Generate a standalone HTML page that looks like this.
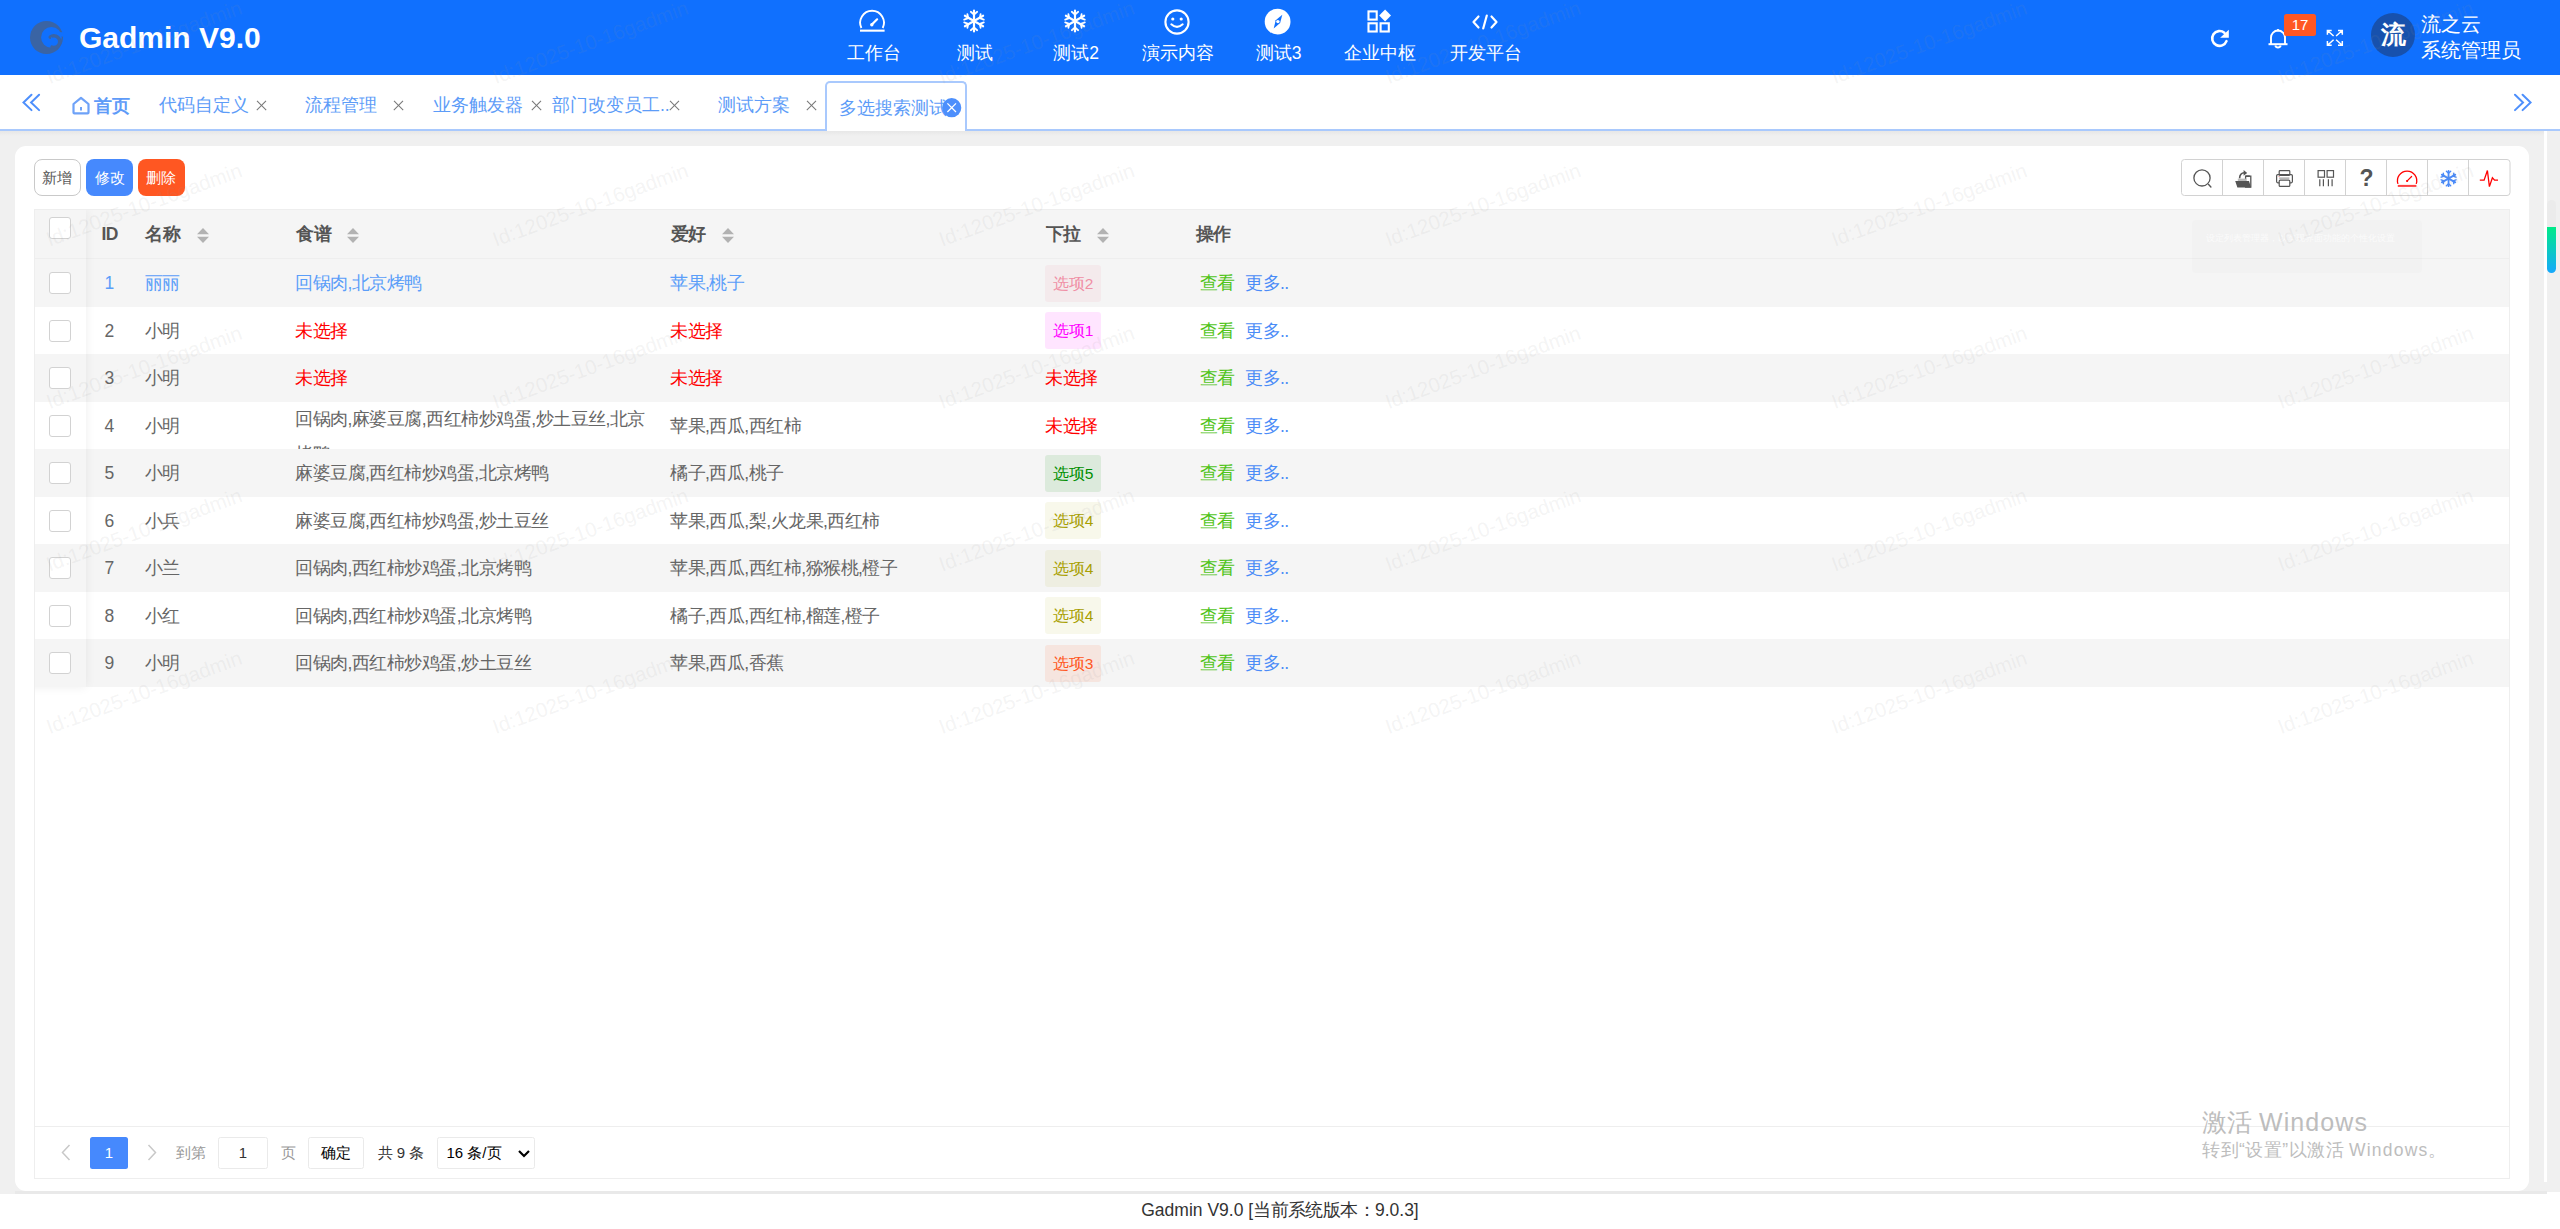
<!DOCTYPE html>
<html><head><meta charset="utf-8">
<style>
*{box-sizing:border-box;margin:0;padding:0}
html,body{width:2560px;height:1229px;overflow:hidden;background:#fff;font-family:"Liberation Sans",sans-serif;color:#666}
.abs{position:absolute}
#hdr{position:absolute;left:0;top:0;width:2560px;height:75px;background:#1070fe;color:#fff}
#tabs{position:absolute;left:0;top:75px;width:2560px;height:56px;background:#fff;border-bottom:2px solid #a9c9fd}
#main{position:absolute;left:0;top:131px;width:2547px;height:1063px;background:#f0f0f0}
#card{position:absolute;left:15px;top:146px;width:2514px;height:1045px;background:#fff;border-radius:11px}
#footer{position:absolute;left:0;top:1194px;width:2560px;height:35px;background:#fff;text-align:center;font-size:17.5px;line-height:32px;color:#333}
.nav{position:absolute;top:0;height:75px;text-align:center;font-size:17.5px;white-space:nowrap}
.nav svg{position:absolute;left:50%;top:9px;transform:translateX(-50%)}
.nav span{position:absolute;left:50%;top:42px;transform:translateX(-50%);line-height:22px}
.tab{position:absolute;top:3px;height:54px;font-size:17.5px;color:#5d9cf8;line-height:54px;white-space:nowrap}
.tx{position:absolute;top:0;width:10px;height:54px}
.tx:before,.tx:after{content:"";position:absolute;left:-1px;top:29.5px;width:13px;height:1.3px;background:#777}
.tx:before{transform:rotate(45deg)}
.tx:after{transform:rotate(-45deg)}
.btn{position:absolute;top:159px;height:37px;width:47px;border-radius:8px;font-size:15px;line-height:37px;text-align:center}
#tbl{position:absolute;left:34px;top:209px;width:2476px;height:970px;border:1px solid #eee}
.row{position:absolute;left:0;width:2474px;height:47.5px;font-size:17.5px;line-height:47.5px;white-space:nowrap}
.row .c{position:absolute;top:1px;letter-spacing:-0.5px}
.cb{position:absolute;left:14px;width:22px;height:22px;border:1.3px solid #d2d2d2;border-radius:3px;background:#fff}
.sort{position:absolute;top:17.5px;width:12px;height:15px}
.tag{position:absolute;top:5.5px;left:1010px;width:56px;height:37px;border-radius:3px;font-size:15.5px;line-height:37px;text-align:center}
.view{color:#5fb878}
</style></head><body>
<div id="hdr">
  <svg class="abs" style="left:30px;top:21px" width="34" height="34" viewBox="0 0 34 34">
    <circle cx="16.5" cy="16.5" r="16.5" fill="#3a64a4"/><circle cx="21.4" cy="16.4" r="10.3" fill="#1070fe"/><rect x="26" y="11.2" width="8" height="4.4" fill="#1070fe"/>
    <path fill="none" stroke="#3a64a4" stroke-width="3.4" stroke-linecap="round" d="M20.2,16.1 A5.8,5.8 0 1 1 22,26"/><circle cx="21.7" cy="17.2" r="0.9" fill="#1070fe"/>
  </svg>
  <div class="abs" style="left:79px;top:20px;font-size:30px;font-weight:bold;line-height:36px">Gadmin V9.0</div>
  <div class="nav" style="left:873.5px"><svg width="28" height="24" viewBox="0 0 28 24" style="top:9px;margin-left:-1px"><path d="M2.4,19 A11.9,11.9 0 1 1 23.7,19" fill="none" stroke="#fff" stroke-width="1.9"/><rect x="1" y="20.6" width="24.6" height="2.1" fill="#fff"/><path d="M12.9,15.6 L18.1,10.3" stroke="#fff" stroke-width="2.2" stroke-linecap="round"/><circle cx="12.8" cy="15.7" r="1.7" fill="#fff"/></svg><span>工作台</span></div>
  <div class="nav" style="left:975px"><svg width="24" height="24" viewBox="0 0 24 24" style="top:9px;margin-left:-1px"><g stroke="#fff" stroke-width="2.2" stroke-linecap="round" fill="none"><path d="M12,1.5V22.5M2.9,6.75L21.1,17.25M2.9,17.25L21.1,6.75"/><path d="M8.8,2.8L12,5.6L15.2,2.8M8.8,21.2L12,18.4L15.2,21.2M2.2,10.6L6.2,9.2L5.4,5.2M21.8,10.6L17.8,9.2L18.6,5.2M2.2,13.4L6.2,14.8L5.4,18.8M21.8,13.4L17.8,14.8L18.6,18.8" stroke-width="1.8"/></g></svg><span>测试</span></div>
  <div class="nav" style="left:1076px"><svg width="24" height="24" viewBox="0 0 24 24" style="top:9px;margin-left:-1px"><g stroke="#fff" stroke-width="2.2" stroke-linecap="round" fill="none"><path d="M12,1.5V22.5M2.9,6.75L21.1,17.25M2.9,17.25L21.1,6.75"/><path d="M8.8,2.8L12,5.6L15.2,2.8M8.8,21.2L12,18.4L15.2,21.2M2.2,10.6L6.2,9.2L5.4,5.2M21.8,10.6L17.8,9.2L18.6,5.2M2.2,13.4L6.2,14.8L5.4,18.8M21.8,13.4L17.8,14.8L18.6,18.8" stroke-width="1.8"/></g></svg><span>测试2</span></div>
  <div class="nav" style="left:1177.5px"><svg width="28" height="28" viewBox="0 0 28 28" style="top:8px;margin-left:-1px"><circle cx="14" cy="14" r="11.6" fill="none" stroke="#fff" stroke-width="2.1"/><circle cx="9.8" cy="11" r="1.6" fill="#fff"/><circle cx="18.2" cy="11" r="1.6" fill="#fff"/><path d="M8.3,16.3 Q14,21.5 19.7,16.3" fill="none" stroke="#fff" stroke-width="2" stroke-linecap="round"/></svg><span>演示内容</span></div>
  <div class="nav" style="left:1278.5px"><svg width="28" height="28" viewBox="0 0 28 28" style="top:8px;margin-left:-1px"><circle cx="13.6" cy="13.65" r="12.9" fill="#fff"/><path d="M18.3,6.8 L16.1,14.9 L9.7,20.6 L11.7,12.2 Z" fill="#1070fe"/><circle cx="13.9" cy="13.6" r="1.7" fill="#fff"/></svg><span>测试3</span></div>
  <div class="nav" style="left:1380px"><svg width="28" height="26" viewBox="0 0 28 26" style="top:9px;margin-left:-0.5px"><g fill="none" stroke="#fff" stroke-width="2.1"><rect x="2.5" y="2.4" width="8.2" height="8.2"/><rect x="2.5" y="14.3" width="8.2" height="8.2"/><rect x="14.6" y="14.3" width="8.2" height="8.2"/></g><path d="M19.1,0.6 L25,6.5 L19.1,12.4 L13.2,6.5 Z" fill="#fff"/></svg><span>企业中枢</span></div>
  <div class="nav" style="left:1486px"><svg width="28" height="18" viewBox="0 0 28 18" style="top:13px;margin-left:-1px"><g fill="none" stroke="#fff" stroke-width="2.2" stroke-linecap="round" stroke-linejoin="round"><path d="M7.5,3.5 L2.5,9 L7.5,14.5M20.5,3.5 L25.5,9 L20.5,14.5M15.8,2.5 L12.2,15.5"/></g></svg><span>开发平台</span></div>
  <svg class="abs" style="left:2208px;top:27px" width="24" height="23" viewBox="0 0 24 23"><path d="M16.37,5.8 A7.4,7.4 0 1 0 18.5,14.1" fill="none" stroke="#fff" stroke-width="2.6" stroke-linecap="round"/><path d="M20.8,2.7 L20.8,10.85 L12.15,10.85 Z" fill="#fff"/></svg>
  <svg class="abs" style="left:2267px;top:27px" width="22" height="23" viewBox="0 0 22 23"><path d="M4,17 V10.5 A7,7 0 0 1 18,10.5 V17" fill="none" stroke="#fff" stroke-width="1.9"/><rect x="1.5" y="16.2" width="19" height="2" fill="#fff"/><path d="M8.3,18.5 A2.8,2.8 0 0 0 13.7,18.5" fill="none" stroke="#fff" stroke-width="1.9"/><rect x="10.1" y="2" width="1.8" height="2.5" fill="#fff"/></svg>
  <div class="abs" style="left:2284px;top:14px;width:32px;height:22px;background:#ff5722;border-radius:2.5px;color:#fff;font-size:15px;line-height:22px;text-align:center">17</div>
  <svg class="abs" style="left:2325px;top:28px" width="20" height="20" viewBox="0 0 20 20"><g fill="none" stroke="#fff" stroke-width="1.5" stroke-linejoin="miter"><path d="M2.4,6.8 V2.5 H6.7M2.5,2.5 L8.6,8M17.3,6.8 V2.5 H13M17.2,2.5 L11.1,8M2.4,13 V17.2 H6.7M2.5,17.2 L8.6,11.7M17.3,13 V17.2 H13M17.2,17.2 L11.1,11.7"/></g></svg>
  <div class="abs" style="left:2371px;top:12.5px;width:44px;height:44px;border-radius:50%;background:#1751ad;color:#fff;font-size:25px;line-height:43px;text-align:center;font-weight:bold">流</div>
  <div class="abs" style="left:2421px;top:12px;font-size:20px;line-height:25.5px;white-space:nowrap">流之云<br>系统管理员</div>
</div>
<div id="tabs">
  <svg class="abs" style="left:21px;top:18px" width="21" height="20" viewBox="0 0 21 20"><g fill="none" stroke="#4d8ffc" stroke-width="2" stroke-linecap="round"><path d="M10.5,1.8 L2.5,9.5 L10.5,17.1M18.1,1.8 L10.1,9.5 L18.1,17.1"/></g></svg>
  <svg class="abs" style="left:71px;top:21px" width="20" height="19" viewBox="0 0 20 19"><path d="M2.5,8 L10,1.8 L17.5,8 V16.4 Q17.5,17.3 16.6,17.3 H3.4 Q2.5,17.3 2.5,16.4 Z" fill="none" stroke="#6ea2f8" stroke-width="2.2" stroke-linejoin="round"/><rect x="9" y="11" width="2" height="3.5" fill="#6ea2f8"/></svg>
  <div class="tab" style="left:94px;top:4px;color:#5e9bf8;font-weight:bold">首页</div>
  <div class="tab" style="left:158.5px">代码自定义</div><div class="tx" style="left:256px"></div>
  <div class="tab" style="left:304.5px">流程管理</div><div class="tx" style="left:393px"></div>
  <div class="tab" style="left:433px">业务触发器</div><div class="tx" style="left:531px"></div>
  <div class="tab" style="left:552px">部门改变员工..</div><div class="tx" style="left:669px"></div>
  <div class="tab" style="left:717.5px">测试方案</div><div class="tx" style="left:806px"></div>
  <div class="abs" style="left:825px;top:6px;width:142px;height:50px;border:2px solid #a9c9fd;border-bottom:none;border-radius:5px 5px 0 0;background:#fff"></div>
  <div class="tab" style="left:838.5px;top:6px">多选搜索测试</div>
  <svg class="abs" style="left:942px;top:23px" width="20" height="20" viewBox="0 0 20 20"><circle cx="9.7" cy="9.7" r="9.6" fill="#4d8ffc"/><path d="M5.4,5.4 L14,14 M14,5.4 L5.4,14" stroke="#fff" stroke-width="1.3"/></svg>
  <svg class="abs" style="left:2511px;top:18px" width="21" height="20" viewBox="0 0 21 20"><g fill="none" stroke="#4d8ffc" stroke-width="2" stroke-linecap="round"><path d="M4,1.8 L12,9.5 L4,17.1M11.6,1.8 L19.6,9.5 L11.6,17.1"/></g></svg>
</div>
<div id="main"></div>
<div id="card"></div>
<div class="btn" style="left:34px;border:1px solid #c9c9c9;background:#fff;color:#555;padding-right:2px;line-height:36px">新增</div>
<div class="btn" style="left:86px;background:#4689fd;color:#fff">修改</div>
<div class="btn" style="left:138px;background:#ff5722;color:#fff;padding-right:2px">删除</div>
<svg class="abs" style="left:2181px;top:159px" width="330" height="37" viewBox="0 0 330 37"><rect x="0.5" y="0.5" width="328.5" height="36" rx="3" fill="#fff" stroke="#d2d2d2" stroke-width="1"/><rect x="41" y="0.5" width="1" height="36" fill="#d2d2d2"/><rect x="82" y="0.5" width="1" height="36" fill="#d2d2d2"/><rect x="123" y="0.5" width="1" height="36" fill="#d2d2d2"/><rect x="164" y="0.5" width="1" height="36" fill="#d2d2d2"/><rect x="205" y="0.5" width="1" height="36" fill="#d2d2d2"/><rect x="246" y="0.5" width="1" height="36" fill="#d2d2d2"/><rect x="287" y="0.5" width="1" height="36" fill="#d2d2d2"/><circle cx="21" cy="18.9" r="8.1" fill="none" stroke="#555" stroke-width="1.3"/><path d="M27.6,25.6 L29.9,28" stroke="#555" stroke-width="1.4" stroke-linecap="round"/><g transform="translate(54.2,11)"><path d="M10.4,6.2 H15.6 V17.2 H10.4 Z" fill="none" stroke="#555" stroke-width="1.3"/><rect x="10.6" y="5.4" width="4" height="1.6" fill="#555"/><path d="M2.6,8.6 H11 V11 H2.6 Z" fill="#bbb"/><path d="M0,11 H13.8 L15.8,17.4 H2.2 Z" fill="#555"/><path d="M4.4,8.2 Q4.6,3 9.2,2.8" fill="none" stroke="#555" stroke-width="1.6"/><path d="M8.4,0 L12,2.9 L8.4,5.8 Z" fill="#555"/></g><g transform="translate(95,11)" fill="none" stroke="#555" stroke-width="1.2"><rect x="3.2" y="0.6" width="10.6" height="4.8" rx="0.8"/><rect x="0.6" y="4.6" width="15.8" height="8.2" rx="1.2"/><rect x="3.2" y="10.2" width="10.6" height="6.2" rx="1" fill="#fff"/><path d="M3.2,8.1 H13.4" stroke-width="0.7"/><path d="M2.3,6.5 H4" stroke="#e88" stroke-width="0.6"/></g><g transform="translate(136.5,11)" fill="none" stroke="#555" stroke-width="1.2"><rect x="0.6" y="0.6" width="6.4" height="6.6"/><rect x="9.6" y="0.6" width="6.4" height="6.6"/><path d="M2.3,9.2 V16.2 M5.9,9.2 V16.2 M10.9,9.2 V16.2 M14.6,9.2 V16.2" stroke-width="1.2"/></g><text x="185.5" y="26.8" font-family="Liberation Sans" font-weight="bold" font-size="23" fill="#555" text-anchor="middle">?</text><g transform="translate(215.8,11)"><path d="M1.2,13.9 A9.65,9.65 0 1 1 19.4,13.9" fill="none" stroke="#f00" stroke-width="1.3"/><rect x="1" y="14.9" width="18.6" height="2" fill="#ff4040"/><path d="M10.4,10.9 L14.8,6.5" stroke="#f00" stroke-width="1.2" stroke-linecap="round"/><circle cx="10.3" cy="11" r="1.1" fill="#f00"/></g><g transform="translate(259.2,11)" stroke="#4a8af8" fill="none" stroke-linecap="round"><path d="M8.35,0.8 V16.2 M1.6,4.6 L15.1,12.4 M1.6,12.4 L15.1,4.6" stroke-width="1.8"/><path d="M6.2,1.2 L8.35,3.3 L10.5,1.2 M6.2,15.8 L8.35,13.7 L10.5,15.8 M0.9,7.2 L3.6,6.2 L3.1,3.3 M15.8,7.2 L13.1,6.2 L13.6,3.3 M0.9,9.8 L3.6,10.8 L3.1,13.7 M15.8,9.8 L13.1,10.8 L13.6,13.7" stroke-width="1.4"/></g><path d="M298.8,21.2 H303.1 L306.4,11.5 L308.4,27.6 L311.4,18.8 L313.6,21.2 H317" fill="none" stroke="#f00" stroke-width="1.3" stroke-linejoin="miter"/></svg>
<div id="tbl"><div class="row" style="top:0;height:49px;background:#f5f5f5;border-bottom:1px solid #eee;color:#555;font-weight:bold"><div class="cb" style="top:7px"></div><div class="c" style="left:66.5px;top:0.5px">ID</div><div class="c" style="left:110px;top:0.5px">名称</div><svg class="sort" style="left:162px" width="12" height="15" viewBox="0 0 12 15"><path d="M6,0 L12,6.2 H0 Z M6,15 L12,8.8 H0 Z" fill="#b2b2b2"/></svg><div class="c" style="left:261px;top:0.5px">食谱</div><svg class="sort" style="left:312px" width="12" height="15" viewBox="0 0 12 15"><path d="M6,0 L12,6.2 H0 Z M6,15 L12,8.8 H0 Z" fill="#b2b2b2"/></svg><div class="c" style="left:635.5px;top:0.5px">爱好</div><svg class="sort" style="left:687px" width="12" height="15" viewBox="0 0 12 15"><path d="M6,0 L12,6.2 H0 Z M6,15 L12,8.8 H0 Z" fill="#b2b2b2"/></svg><div class="c" style="left:1010.5px;top:0.5px">下拉</div><svg class="sort" style="left:1062px" width="12" height="15" viewBox="0 0 12 15"><path d="M6,0 L12,6.2 H0 Z M6,15 L12,8.8 H0 Z" fill="#b2b2b2"/></svg><div class="c" style="left:1160.5px;top:0.5px">操作</div></div><div class="row" style="top:49px;background:#f5f5f5;color:#5b9ef9;"><div class="cb" style="top:13px"></div><div class="c" style="left:69.5px">1</div><div class="c" style="left:109.5px">丽丽</div><div class="c" style="left:260px">回锅肉,北京烤鸭</div><div class="c" style="left:635px">苹果,桃子</div><div class="tag" style="color:#f08fa5;background:rgba(240,120,140,.08)">选项2</div><div class="c" style="left:1164.5px;color:#52c41a">查看</div><div class="c" style="left:1210px;color:#4b8cf7">更多..</div></div><div class="row" style="top:96.5px;background:#fff;"><div class="cb" style="top:13px"></div><div class="c" style="left:69.5px">2</div><div class="c" style="left:109.5px">小明</div><div class="c" style="left:260px"><span style="color:#f00">未选择</span></div><div class="c" style="left:635px"><span style="color:#f00">未选择</span></div><div class="tag" style="color:#ff00ff;background:rgba(255,0,255,.1)">选项1</div><div class="c" style="left:1164.5px;color:#52c41a">查看</div><div class="c" style="left:1210px;color:#4b8cf7">更多..</div></div><div class="row" style="top:144px;background:#f5f5f5;"><div class="cb" style="top:13px"></div><div class="c" style="left:69.5px">3</div><div class="c" style="left:109.5px">小明</div><div class="c" style="left:260px"><span style="color:#f00">未选择</span></div><div class="c" style="left:635px"><span style="color:#f00">未选择</span></div><div class="c" style="left:1010px"><span style="color:#f00">未选择</span></div><div class="c" style="left:1164.5px;color:#52c41a">查看</div><div class="c" style="left:1210px;color:#4b8cf7">更多..</div></div><div class="row" style="top:191.5px;background:#fff;"><div class="cb" style="top:13px"></div><div class="c" style="left:69.5px">4</div><div class="c" style="left:109.5px">小明</div><div class="c" style="left:260px;width:360px;height:47.5px;overflow:hidden;white-space:normal;line-height:35px;top:0">回锅肉,麻婆豆腐,西红柿炒鸡蛋,炒土豆丝,北京烤鸭</div><div class="c" style="left:635px">苹果,西瓜,西红柿</div><div class="c" style="left:1010px"><span style="color:#f00">未选择</span></div><div class="c" style="left:1164.5px;color:#52c41a">查看</div><div class="c" style="left:1210px;color:#4b8cf7">更多..</div></div><div class="row" style="top:239px;background:#f5f5f5;"><div class="cb" style="top:13px"></div><div class="c" style="left:69.5px">5</div><div class="c" style="left:109.5px">小明</div><div class="c" style="left:260px">麻婆豆腐,西红柿炒鸡蛋,北京烤鸭</div><div class="c" style="left:635px">橘子,西瓜,桃子</div><div class="tag" style="color:#008f00;background:rgba(0,140,0,.1)">选项5</div><div class="c" style="left:1164.5px;color:#52c41a">查看</div><div class="c" style="left:1210px;color:#4b8cf7">更多..</div></div><div class="row" style="top:286.5px;background:#fff;"><div class="cb" style="top:13px"></div><div class="c" style="left:69.5px">6</div><div class="c" style="left:109.5px">小兵</div><div class="c" style="left:260px">麻婆豆腐,西红柿炒鸡蛋,炒土豆丝</div><div class="c" style="left:635px">苹果,西瓜,梨,火龙果,西红柿</div><div class="tag" style="color:#a89f00;background:rgba(170,165,0,.08)">选项4</div><div class="c" style="left:1164.5px;color:#52c41a">查看</div><div class="c" style="left:1210px;color:#4b8cf7">更多..</div></div><div class="row" style="top:334px;background:#f5f5f5;"><div class="cb" style="top:13px"></div><div class="c" style="left:69.5px">7</div><div class="c" style="left:109.5px">小兰</div><div class="c" style="left:260px">回锅肉,西红柿炒鸡蛋,北京烤鸭</div><div class="c" style="left:635px">苹果,西瓜,西红柿,猕猴桃,橙子</div><div class="tag" style="color:#a89f00;background:rgba(170,165,0,.08)">选项4</div><div class="c" style="left:1164.5px;color:#52c41a">查看</div><div class="c" style="left:1210px;color:#4b8cf7">更多..</div></div><div class="row" style="top:381.5px;background:#fff;"><div class="cb" style="top:13px"></div><div class="c" style="left:69.5px">8</div><div class="c" style="left:109.5px">小红</div><div class="c" style="left:260px">回锅肉,西红柿炒鸡蛋,北京烤鸭</div><div class="c" style="left:635px">橘子,西瓜,西红柿,榴莲,橙子</div><div class="tag" style="color:#a89f00;background:rgba(170,165,0,.08)">选项4</div><div class="c" style="left:1164.5px;color:#52c41a">查看</div><div class="c" style="left:1210px;color:#4b8cf7">更多..</div></div><div class="row" style="top:429px;background:#f5f5f5;"><div class="cb" style="top:13px"></div><div class="c" style="left:69.5px">9</div><div class="c" style="left:109.5px">小明</div><div class="c" style="left:260px">回锅肉,西红柿炒鸡蛋,炒土豆丝</div><div class="c" style="left:635px">苹果,西瓜,香蕉</div><div class="tag" style="color:#ff5722;background:rgba(255,87,34,.1)">选项3</div><div class="c" style="left:1164.5px;color:#52c41a">查看</div><div class="c" style="left:1210px;color:#4b8cf7">更多..</div></div>
  <div class="abs" style="left:0;top:0;width:80px;height:520px;overflow:hidden"><div class="abs" style="left:-10px;top:0;width:61px;height:477px;box-shadow:0 0 10px rgba(0,0,0,.07)"></div></div>
  <div class="abs" style="left:0;top:916px;width:2474px;height:52px;border-top:1px solid #eee;font-size:15px;color:#333">
    <svg class="abs" style="left:26px;top:17px" width="10" height="17" viewBox="0 0 10 17"><path d="M8.5,1 L1.5,8.5 L8.5,16" fill="none" stroke="#c8c8c8" stroke-width="1.5"/></svg>
    <div class="abs" style="left:55px;top:10px;width:38px;height:31.5px;background:#4689fd;border-radius:2.5px;color:#fff;text-align:center;line-height:31px">1</div>
    <svg class="abs" style="left:112px;top:17px" width="10" height="17" viewBox="0 0 10 17"><path d="M1.5,1 L8.5,8.5 L1.5,16" fill="none" stroke="#c8c8c8" stroke-width="1.5"/></svg>
    <div class="abs" style="left:141px;top:10px;line-height:31.5px;color:#999">到第</div>
    <div class="abs" style="left:183px;top:10px;width:50px;height:31.5px;border:1px solid #eaeaea;border-radius:2.5px;text-align:center;line-height:29px">1</div>
    <div class="abs" style="left:246px;top:10px;line-height:31.5px;color:#999">页</div>
    <div class="abs" style="left:272.5px;top:10px;width:56px;height:31.5px;border:1px solid #eaeaea;border-radius:2.5px;text-align:center;line-height:30px;color:#000">确定</div>
    <div class="abs" style="left:342.5px;top:10px;line-height:31px">共 9 条</div>
    <div class="abs" style="left:401.5px;top:10px;width:98px;height:31.5px;border:1px solid #eaeaea;border-radius:2.5px;line-height:29px;padding-left:9px;color:#000">16 条/页</div>
    <svg class="abs" style="left:482px;top:22px" width="14" height="10" viewBox="0 0 14 10"><path d="M2,2 L7,7 L12,2" fill="none" stroke="#000" stroke-width="2.2"/></svg>
  </div>
</div>
<div class="abs" style="left:2192px;top:220px;width:230px;height:52.5px;background:rgba(0,0,0,.012);border-radius:3px"></div>
<div class="abs" style="left:2206px;top:232px;font-size:9px;color:rgba(255,255,255,.7);white-space:nowrap">设定列表管理器，以实现界面功能的个性化设置</div>
<div class="abs" style="left:0;top:131px;width:2544px;height:5px;background:linear-gradient(rgba(0,0,0,.04),rgba(0,0,0,0))"></div>
<div class="abs" style="left:2544px;top:131px;width:3px;height:1051px;background:#fff"></div><div class="abs" style="left:2529px;top:1191px;width:18px;height:3px;background:#e9e9e9"></div><div class="abs" style="left:15px;top:1191px;width:2514px;height:3px;background:#e9e9e9"></div>
<div class="abs" style="left:2547px;top:131px;width:13px;height:1061px;background:#f0f0f0"></div>
<div class="abs" style="left:2547px;top:200px;width:9.2px;height:30px;border-radius:4.6px 4.6px 0 0;background:#ebebeb"></div>
<div class="abs" style="left:2547px;top:226.7px;width:9.2px;height:46px;border-radius:0 0 4.6px 4.6px;background:linear-gradient(#00ea88,#17a8fc)"></div>
<div class="abs" style="left:2202px;top:1106px;font-size:25px;line-height:32px;color:#bdbdbd;white-space:nowrap">激活 <span style="letter-spacing:1.1px">Windows</span></div>
<div class="abs" style="left:2202px;top:1139px;font-size:17.5px;line-height:22px;color:#bdbdbd;white-space:nowrap"><span style="letter-spacing:0.5px">转到“设置”以激活</span> <span style="letter-spacing:1.2px">Windows</span>。</div>
<svg class="abs" style="left:0;top:0;pointer-events:none" width="2560" height="800" viewBox="0 0 2560 800"><text x="49.5" y="84.2" transform="rotate(-20 49.5 84.2)" font-family="Liberation Sans" font-size="20.5" fill="rgba(150,150,150,.11)">Id:12025-10-16gadmin</text><text x="495.8" y="84.2" transform="rotate(-20 495.8 84.2)" font-family="Liberation Sans" font-size="20.5" fill="rgba(150,150,150,.11)">Id:12025-10-16gadmin</text><text x="942.1" y="84.2" transform="rotate(-20 942.1 84.2)" font-family="Liberation Sans" font-size="20.5" fill="rgba(150,150,150,.11)">Id:12025-10-16gadmin</text><text x="1388.4" y="84.2" transform="rotate(-20 1388.4 84.2)" font-family="Liberation Sans" font-size="20.5" fill="rgba(150,150,150,.11)">Id:12025-10-16gadmin</text><text x="1834.7" y="84.2" transform="rotate(-20 1834.7 84.2)" font-family="Liberation Sans" font-size="20.5" fill="rgba(150,150,150,.11)">Id:12025-10-16gadmin</text><text x="2281" y="84.2" transform="rotate(-20 2281 84.2)" font-family="Liberation Sans" font-size="20.5" fill="rgba(150,150,150,.11)">Id:12025-10-16gadmin</text><text x="49.5" y="246.7" transform="rotate(-20 49.5 246.7)" font-family="Liberation Sans" font-size="20.5" fill="rgba(150,150,150,.11)">Id:12025-10-16gadmin</text><text x="495.8" y="246.7" transform="rotate(-20 495.8 246.7)" font-family="Liberation Sans" font-size="20.5" fill="rgba(150,150,150,.11)">Id:12025-10-16gadmin</text><text x="942.1" y="246.7" transform="rotate(-20 942.1 246.7)" font-family="Liberation Sans" font-size="20.5" fill="rgba(150,150,150,.11)">Id:12025-10-16gadmin</text><text x="1388.4" y="246.7" transform="rotate(-20 1388.4 246.7)" font-family="Liberation Sans" font-size="20.5" fill="rgba(150,150,150,.11)">Id:12025-10-16gadmin</text><text x="1834.7" y="246.7" transform="rotate(-20 1834.7 246.7)" font-family="Liberation Sans" font-size="20.5" fill="rgba(150,150,150,.11)">Id:12025-10-16gadmin</text><text x="2281" y="246.7" transform="rotate(-20 2281 246.7)" font-family="Liberation Sans" font-size="20.5" fill="rgba(150,150,150,.11)">Id:12025-10-16gadmin</text><text x="49.5" y="409.2" transform="rotate(-20 49.5 409.2)" font-family="Liberation Sans" font-size="20.5" fill="rgba(150,150,150,.11)">Id:12025-10-16gadmin</text><text x="495.8" y="409.2" transform="rotate(-20 495.8 409.2)" font-family="Liberation Sans" font-size="20.5" fill="rgba(150,150,150,.11)">Id:12025-10-16gadmin</text><text x="942.1" y="409.2" transform="rotate(-20 942.1 409.2)" font-family="Liberation Sans" font-size="20.5" fill="rgba(150,150,150,.11)">Id:12025-10-16gadmin</text><text x="1388.4" y="409.2" transform="rotate(-20 1388.4 409.2)" font-family="Liberation Sans" font-size="20.5" fill="rgba(150,150,150,.11)">Id:12025-10-16gadmin</text><text x="1834.7" y="409.2" transform="rotate(-20 1834.7 409.2)" font-family="Liberation Sans" font-size="20.5" fill="rgba(150,150,150,.11)">Id:12025-10-16gadmin</text><text x="2281" y="409.2" transform="rotate(-20 2281 409.2)" font-family="Liberation Sans" font-size="20.5" fill="rgba(150,150,150,.11)">Id:12025-10-16gadmin</text><text x="49.5" y="571.7" transform="rotate(-20 49.5 571.7)" font-family="Liberation Sans" font-size="20.5" fill="rgba(150,150,150,.11)">Id:12025-10-16gadmin</text><text x="495.8" y="571.7" transform="rotate(-20 495.8 571.7)" font-family="Liberation Sans" font-size="20.5" fill="rgba(150,150,150,.11)">Id:12025-10-16gadmin</text><text x="942.1" y="571.7" transform="rotate(-20 942.1 571.7)" font-family="Liberation Sans" font-size="20.5" fill="rgba(150,150,150,.11)">Id:12025-10-16gadmin</text><text x="1388.4" y="571.7" transform="rotate(-20 1388.4 571.7)" font-family="Liberation Sans" font-size="20.5" fill="rgba(150,150,150,.11)">Id:12025-10-16gadmin</text><text x="1834.7" y="571.7" transform="rotate(-20 1834.7 571.7)" font-family="Liberation Sans" font-size="20.5" fill="rgba(150,150,150,.11)">Id:12025-10-16gadmin</text><text x="2281" y="571.7" transform="rotate(-20 2281 571.7)" font-family="Liberation Sans" font-size="20.5" fill="rgba(150,150,150,.11)">Id:12025-10-16gadmin</text><text x="49.5" y="734.2" transform="rotate(-20 49.5 734.2)" font-family="Liberation Sans" font-size="20.5" fill="rgba(150,150,150,.11)">Id:12025-10-16gadmin</text><text x="495.8" y="734.2" transform="rotate(-20 495.8 734.2)" font-family="Liberation Sans" font-size="20.5" fill="rgba(150,150,150,.11)">Id:12025-10-16gadmin</text><text x="942.1" y="734.2" transform="rotate(-20 942.1 734.2)" font-family="Liberation Sans" font-size="20.5" fill="rgba(150,150,150,.11)">Id:12025-10-16gadmin</text><text x="1388.4" y="734.2" transform="rotate(-20 1388.4 734.2)" font-family="Liberation Sans" font-size="20.5" fill="rgba(150,150,150,.11)">Id:12025-10-16gadmin</text><text x="1834.7" y="734.2" transform="rotate(-20 1834.7 734.2)" font-family="Liberation Sans" font-size="20.5" fill="rgba(150,150,150,.11)">Id:12025-10-16gadmin</text><text x="2281" y="734.2" transform="rotate(-20 2281 734.2)" font-family="Liberation Sans" font-size="20.5" fill="rgba(150,150,150,.11)">Id:12025-10-16gadmin</text></svg>
<div id="footer">Gadmin V9.0 [<span style="letter-spacing:-0.6px">当前系统版本：</span>9.0.3]</div>
</body></html>
